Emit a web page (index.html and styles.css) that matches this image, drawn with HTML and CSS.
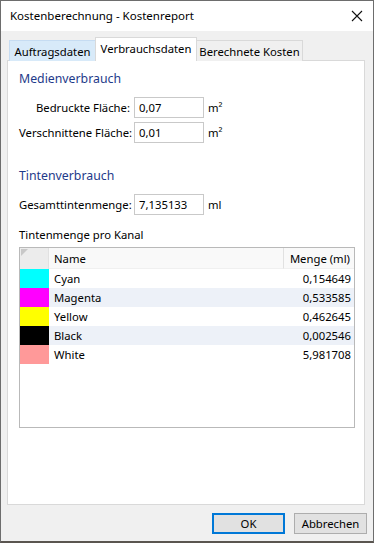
FILE: index.html
```html
<!DOCTYPE html>
<html lang="de">
<head>
<meta charset="utf-8">
<title>Kostenberechnung - Kostenreport</title>
<link rel="stylesheet" href="styles.css">
</head>
<body>
<div class="window">
  <div class="titlebar">
    <span class="title">Kostenberechnung - Kostenreport</span>
    <svg class="close" width="12" height="12" viewBox="0 0 12 12"><path d="M1 1L11 11M11 1L1 11" stroke="#111" stroke-width="1.1" fill="none"/></svg>
  </div>
  <div class="client">
    <div class="tabrow">
      <div class="tab tab-hover tab-a">Auftragsdaten</div>
      <div class="tab tab-selected tab-b">Verbrauchsdaten</div>
      <div class="tab tab-c">Berechnete Kosten</div>
    </div>
    <div class="panel">
      <div class="group-title">Medienverbrauch</div>
      <div class="form form-medien">
        <label class="lbl">Bedruckte Fläche:</label>
        <div class="field">0,07</div>
        <span class="unit">m²</span>
        <label class="lbl">Verschnittene Fläche:</label>
        <div class="field">0,01</div>
        <span class="unit">m²</span>
      </div>
      <div class="group-title group-tinte">Tintenverbrauch</div>
      <div class="form form-tinte">
        <label class="lbl">Gesamttintenmenge:</label>
        <div class="field">7,135133</div>
        <span class="unit">ml</span>
      </div>
      <div class="sub-title">Tintenmenge pro Kanal</div>
      <div class="grid">
        <div class="grow ghead">
          <div class="corner"><svg width="8" height="8" viewBox="0 0 8 8"><path d="M0 0H7L0 7Z" fill="#c8c8c8"/></svg></div>
          <div class="hcell hname">Name</div>
          <div class="hcell hval">Menge (ml)</div>
        </div>
        <div class="grow">
          <div class="swatch sw-cyan"></div><div class="cell">Cyan</div><div class="cell val">0,154649</div>
        </div>
        <div class="grow alt">
          <div class="swatch sw-magenta"></div><div class="cell">Magenta</div><div class="cell val">0,533585</div>
        </div>
        <div class="grow">
          <div class="swatch sw-yellow"></div><div class="cell">Yellow</div><div class="cell val">0,462645</div>
        </div>
        <div class="grow alt">
          <div class="swatch sw-black"></div><div class="cell">Black</div><div class="cell val">0,002546</div>
        </div>
        <div class="grow">
          <div class="swatch sw-white"></div><div class="cell">White</div><div class="cell val">5,981708</div>
        </div>
      </div>
    </div>
    <div class="buttons">
      <button class="btn btn-default">OK</button>
      <button class="btn">Abbrechen</button>
    </div>
  </div>
</div>
</body>
</html>
```
FILE: styles.css
```css
html, body {
  margin: 0;
  padding: 0;
  background: #f0f0f0;
}
body {
  font-family: "Noto Sans", "Open Sans", sans-serif;
  font-size: 11.3px;
  color: #000;
}
.window {
  width: 374px;
  height: 543px;
  box-sizing: border-box;
  border: 1px solid #6d6d6d;
  border-bottom: 2px solid #5a5550;
  display: flex;
  flex-direction: column;
  overflow: hidden;
}
.titlebar {
  height: 30px;
  background: #fff;
  display: flex;
  align-items: center;
  padding-left: 9px;
  padding-right: 10px;
  justify-content: space-between;
}
.title {
  font-size: 11.5px;
  line-height: 16px;
  white-space: nowrap;
}
.close {
  display: block;
}
.client {
  flex: 1;
  background: #f0f0f0;
  padding: 6px 8px 0 6px;
  display: flex;
  flex-direction: column;
}
.tabrow {
  height: 24px;
  display: flex;
  align-items: flex-start;
  padding-left: 2px;
  z-index: 2;
}
.tab {
  box-sizing: border-box;
  height: 21px;
  margin-top: 3px;
  border: 1px solid #d9d9d9;
  border-bottom: none;
  display: flex;
  align-items: center;
  justify-content: center;
  line-height: 16px;
  padding-top: 1px;
  white-space: nowrap;
}
.tab-a { width: 86px; }
.tab-b { width: 102px; }
.tab-c { width: 106px; }
.tab-hover {
  background: #d8eaf9;
  border-color: #c6dcf2;
  border-right: none;
}
.tab-selected {
  background: #fff;
  height: 24px;
  margin-top: 0;
  align-items: flex-start;
  padding-top: 3px;
}
.tab-c {
  background: #f0f0f0;
  border-left: none;
}
.panel {
  height: 445px;
  box-sizing: border-box;
  margin-top: -1px;
  background: #fff;
  border: 1px solid #d9d9d9;
  padding: 9px 0 0 11px;
  display: flex;
  flex-direction: column;
}
.group-title {
  font-size: 12.3px;
  line-height: 18px;
  color: #1e3a8a;
}
.group-tinte {
  margin-top: 24px;
}
.form {
  display: grid;
  grid-template-columns: 111px 70px auto;
  column-gap: 4px;
  row-gap: 4px;
  align-items: center;
  margin-top: 9px;
}
.lbl {
  text-align: right;
  white-space: nowrap;
}
.form-tinte .lbl {
  text-align: left;
}
.field {
  box-sizing: border-box;
  height: 21px;
  border: 1px solid #c9c9c9;
  padding: 0 4px;
  line-height: 19px;
  background: #fff;
}
.unit {
  padding-left: 0;
}
.sub-title {
  margin-top: 12px;
  line-height: 16px;
}
.grid {
  margin-top: 4px;
  width: 336px;
  height: 181px;
  box-sizing: border-box;
  border: 1px solid #b9b9b9;
  display: flex;
  flex-direction: column;
}
.grow {
  display: grid;
  grid-template-columns: 29px 235px 1fr;
  height: 19px;
  align-items: stretch;
}
.ghead {
  height: 21px;
  background: #fff;
}
.corner {
  background: #ececec;
  border-right: 1px solid #e1e1e1;
  line-height: 0;
  padding: 1px 0 0 1px;
}
.hcell {
  display: flex;
  align-items: center;
  background: #f9f9f9;
  border-bottom: 1px solid #f0f0f0;
}
.hname {
  padding-left: 5px;
  border-right: 1px solid #e1e1e1;
}
.hval {
  justify-content: flex-end;
  padding-right: 4px;
}
.cell {
  display: flex;
  align-items: center;
  padding-left: 5px;
  line-height: 16px;
}
.val {
  justify-content: flex-end;
  padding-right: 3px;
}
.alt {
  background: #edf1f8;
}
.sw-cyan { background: #00ffff; }
.sw-magenta { background: #ff00ff; }
.sw-yellow { background: #ffff00; }
.sw-black { background: #000; }
.sw-white { background: #ff9999; }
.buttons {
  display: flex;
  justify-content: flex-end;
  gap: 9px;
  margin-top: 8px;
  margin-right: -2px;
}
.btn {
  box-sizing: border-box;
  width: 73px;
  height: 21px;
  background: #e1e1e1;
  border: 1px solid #adadad;
  font-family: "Noto Sans", "Open Sans", sans-serif;
  font-size: 11.3px;
  padding: 0;
  color: #000;
  line-height: 16px;
}
.btn-default {
  border: 2px solid #0078d7;
}
```
